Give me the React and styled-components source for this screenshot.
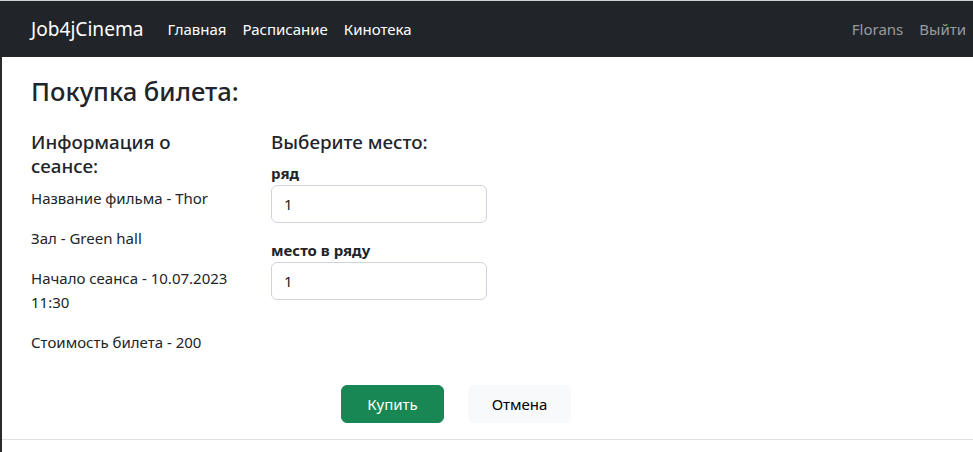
import React from "react";
import styled, { createGlobalStyle } from "styled-components";

const Global = createGlobalStyle`
  html, body { margin: 0; padding: 0; background: #fff; }
  body {
    font-family: "Noto Sans", "Open Sans", sans-serif;
    font-size: 15px;
    line-height: 24px;
    color: #212529;
  }
  * { box-sizing: border-box; }
`;

const Navbar = styled.nav`
  display: flex;
  align-items: center;
  background: #212529;
  border-top: 1px solid #cfd0d1;
  padding: 8px 7px 8px 31px;
  height: 57px;
`;

const Brand = styled.a`
  color: #fff;
  font-size: 19.1px;
  line-height: 30px;
  padding: 5px 0;
  margin-right: 16px;
  text-decoration: none;
`;

const NavList = styled.div`
  display: flex;
  align-items: center;
  margin-left: ${(p) => (p.$right ? "auto" : "0")};
`;

const NavLink = styled.a`
  color: ${(p) => (p.$muted ? "rgba(255,255,255,0.55)" : "#fff")};
  padding: 8px;
  line-height: 24px;
  text-decoration: none;
  &:last-child { padding-right: ${(p) => (p.$muted ? "0" : "8px")}; }
`;

const Main = styled.main`
  border-left: 2px solid #2b2b2b;
  padding: 19px 0 0 29px;
`;

const Title = styled.h3`
  margin: 0 0 22px;
  font-size: 25.6px;
  font-weight: 500;
  line-height: 32px;
`;

const Row = styled.div`
  display: flex;
  gap: 24px;
`;

const Col = styled.div`
  width: 216px;
`;

const SubTitle = styled.h5`
  margin: 0 0 8px;
  max-width: ${(p) => (p.$narrow ? "180px" : "none")};
  font-size: 18.8px;
  font-weight: 500;
  line-height: 24px;
`;

const Info = styled.p`
  margin: 0 0 16px;
`;

const Group = styled.div`
  margin-bottom: 16px;
`;

const Label = styled.label`
  display: block;
  font-weight: 700;
  line-height: 23px;
`;

const Input = styled.input`
  display: block;
  width: 216px;
  height: 38px;
  padding: 6px 12px;
  font: inherit;
  color: #212529;
  border: 1px solid #ced4da;
  border-radius: 6px;
  background: #fff;
`;

const Actions = styled.div`
  display: flex;
  gap: 24px;
  margin: 15px 0 0 310px;
  padding-bottom: 16px;
`;

const Button = styled.button`
  width: 103px;
  height: 38px;
  font: inherit;
  border-radius: 6px;
  border: 1px solid ${(p) => (p.$primary ? "#198754" : "#f8f9fa")};
  background: ${(p) => (p.$primary ? "#198754" : "#f8f9fa")};
  color: ${(p) => (p.$primary ? "#fff" : "#000")};
  cursor: pointer;
`;

const Footer = styled.footer`
  border-top: 1px solid #dee2e6;
  height: 13px;
  margin-left: -29px;
`;

export default function App() {
  return (
    <>
      <Global />
      <Navbar>
        <Brand href="#">Job4jCinema</Brand>
        <NavList>
          <NavLink href="#">Главная</NavLink>
          <NavLink href="#">Расписание</NavLink>
          <NavLink href="#">Кинотека</NavLink>
        </NavList>
        <NavList $right>
          <NavLink $muted href="#">Florans</NavLink>
          <NavLink $muted href="#">Выйти</NavLink>
        </NavList>
      </Navbar>
      <Main>
        <Title>Покупка билета:</Title>
        <Row>
          <Col>
            <SubTitle $narrow>Информация о сеансе:</SubTitle>
            <Info>Название фильма - Thor</Info>
            <Info>Зал - Green hall</Info>
            <Info>Начало сеанса - 10.07.2023 11:30</Info>
            <Info>Стоимость билета - 200</Info>
          </Col>
          <Col>
            <SubTitle>Выберите место:</SubTitle>
            <Group>
              <Label htmlFor="row">ряд</Label>
              <Input id="row" defaultValue="1" />
            </Group>
            <Group>
              <Label htmlFor="place">место в ряду</Label>
              <Input id="place" defaultValue="1" />
            </Group>
          </Col>
        </Row>
        <Actions>
          <Button $primary>Купить</Button>
          <Button>Отмена</Button>
        </Actions>
        <Footer />
      </Main>
    </>
  );
}
